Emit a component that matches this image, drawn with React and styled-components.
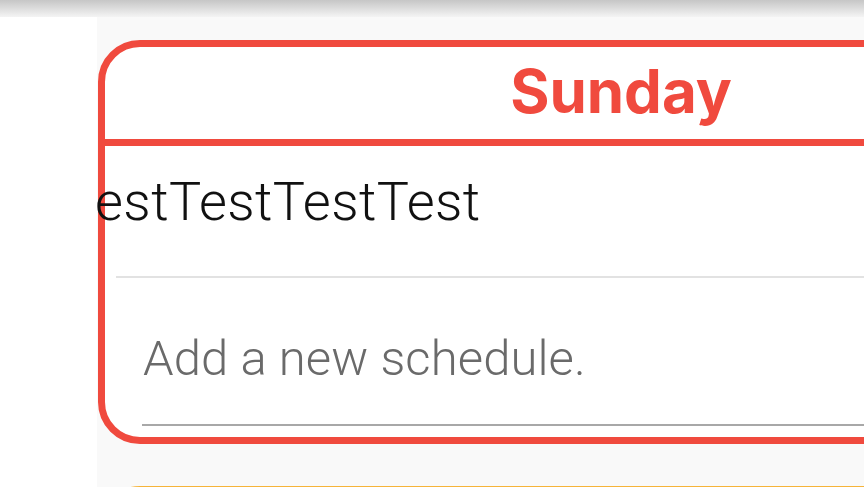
import React from 'react';
import styled, { createGlobalStyle } from 'styled-components';

const GlobalStyle = createGlobalStyle`
    html, body {
        margin: 0;
        padding: 0;
        background: #ffffff;
        font-family: Roboto, "Noto Sans", sans-serif;
    }
`;

const Page = styled.div`
    width: 864px;
    height: 487px;
    display: flex;
    flex-direction: column;
    overflow: hidden;
`;

const Shade = styled.div`
    height: 17px;
    flex-shrink: 0;
    background: linear-gradient(#c6c6c6, #f4f4f4);
`;

const Body = styled.div`
    flex: 1;
    display: flex;
    min-height: 0;
`;

const Gutter = styled.div`
    width: 97px;
    flex-shrink: 0;
    background: #ffffff;
`;

const Viewport = styled.div`
    flex: 1;
    min-width: 0;
    overflow: hidden;
    background: #f9f9f9;
    padding: 23px 0 0 1px;
    display: flex;
    flex-direction: column;
    gap: 42px;
`;

const Card = styled.div`
    width: 1046px;
    min-height: 120px;
    flex-shrink: 0;
    box-sizing: border-box;
    background: #ffffff;
    border: 7px solid ${p => p.$color};
    border-radius: 42px;
`;

const DayHeader = styled.div`
    height: 92px;
    border-bottom: 7px solid #f04a3e;
    display: flex;
    align-items: center;
    justify-content: center;
`;

const DayTitle = styled.h2`
    margin: 0 0 4px;
    font-family: Inter, "Noto Sans", sans-serif;
    font-size: 60px;
    font-weight: 700;
    letter-spacing: 0;
    color: #f04a3e;
`;

const Schedule = styled.div`
    padding-top: 25px;
    white-space: nowrap;
`;

const ScheduleText = styled.div`
    margin-left: -40px;
    font-size: 54px;
    font-weight: 300;
    letter-spacing: 0.4px;
    color: #111111;
    line-height: 62px;
`;

const Divider = styled.div`
    margin: 43px 0 0 11px;
    height: 2px;
    background: #e2e2e2;
`;

const AddRow = styled.div`
    padding: 51px 0 0 37px;
`;

const AddInput = styled.input`
    display: block;
    width: 100%;
    box-sizing: border-box;
    border: none;
    border-bottom: 2px solid #a8a8a8;
    outline: none;
    background: transparent;
    padding: 0 0 35px 1px;
    font-family: Roboto, "Noto Sans", sans-serif;
    font-size: 49px;
    font-weight: 300;
    letter-spacing: 0.1px;
    color: #333333;
    line-height: 60px;
    &::placeholder {
        color: #6a6a6a;
    }
`;

const Footer = styled.div`
    height: 11px;
`;

const App = () => {
    return (
        <Page>
            <GlobalStyle />
            <Shade />
            <Body>
                <Gutter />
                <Viewport>
                    <Card $color="#f04a3e">
                        <DayHeader>
                            <DayTitle>Sunday</DayTitle>
                        </DayHeader>
                        <Schedule>
                            <ScheduleText>TestTestTestTest</ScheduleText>
                        </Schedule>
                        <Divider />
                        <AddRow>
                            <AddInput placeholder="Add a new schedule." />
                        </AddRow>
                        <Footer />
                    </Card>
                    <Card $color="#f6b43a" />
                </Viewport>
            </Body>
        </Page>
    );
};

export default App;
